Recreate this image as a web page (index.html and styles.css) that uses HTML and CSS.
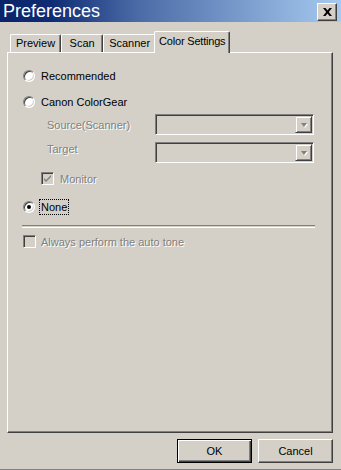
FILE: index.html
```html
<!DOCTYPE html>
<html lang="en">
<head>
  <meta charset="UTF-8" />
  <title>Preferences</title>
  <link rel="stylesheet" href="styles.css">
</head>
<body>
  <div class="window">
    <div class="titlebar">
      <span class="title">Preferences</span>
      <button class="close-btn" aria-label="Close">
        <svg width="9" height="8" viewBox="0 0 9 8">
          <path d="M0 0h2.5l2 2.6L6.5 0H9L5.8 4 9 8H6.5L4.5 5.4 2.5 8H0l3.2-4z" fill="#000"/>
        </svg>
      </button>
    </div>

    <div class="tabs">
      <div class="tab">Preview</div>
      <div class="tab">Scan</div>
      <div class="tab">Scanner</div>
      <div class="tab active">Color Settings</div>
    </div>

    <div class="panel">
      <label class="option"><span class="radio"></span>Recommended</label>
      <label class="option option-gear"><span class="radio"></span>Canon ColorGear</label>

      <div class="field field-source">
        <span class="field-label disabled">Source(Scanner)</span>
        <div class="combo"><span class="combo-btn"><span class="arrow"></span></span></div>
      </div>
      <div class="field field-target">
        <span class="field-label disabled">Target</span>
        <div class="combo"><span class="combo-btn"><span class="arrow"></span></span></div>
      </div>

      <label class="check-row monitor">
        <span class="check">
          <svg width="9" height="9" viewBox="0 0 9 9">
            <path d="M1 4l2 2 5-5v2L3 8 1 6z" fill="#808080"/>
          </svg>
        </span>
        <span class="disabled">Monitor</span>
      </label>

      <label class="option option-none"><span class="radio checked"></span><span class="focus">None</span></label>

      <div class="separator"></div>

      <label class="check-row auto-tone">
        <span class="check"></span>
        <span class="disabled">Always perform the auto tone</span>
      </label>
    </div>

    <div class="footer">
      <button class="btn default">OK</button>
      <button class="btn">Cancel</button>
    </div>
  </div>
</body>
</html>
```

FILE: styles.css
```css
body {
  margin: 0;
  background: #d4d0c8;
  font-family: "Liberation Sans", Arial, sans-serif;
  font-size: 11px;
  color: #000;
}

.window {
  width: 341px;
  height: 470px;
  box-sizing: border-box;
  border-bottom: 1px solid #808080;
  display: flex;
  flex-direction: column;
}

/* title bar */
.titlebar {
  height: 22px;
  background: linear-gradient(to right, #0a246a, #0e2c74 15%, #4a6aa6 40%, #a6caf0);
  display: flex;
  align-items: center;
  justify-content: space-between;
  padding: 0 4px 0 3px;
}

.title {
  color: #fff;
  font-size: 18px;
  line-height: 22px;
}

.close-btn {
  width: 20px;
  height: 18px;
  margin-top: 2px;
  padding: 0;
  box-sizing: border-box;
  background: #d4d0c8;
  border: 1px solid;
  border-color: #fff #404040 #404040 #fff;
  box-shadow: inset -1px -1px #808080;
  display: flex;
  align-items: center;
  justify-content: center;
}

/* tabs */
.tabs {
  display: flex;
  align-items: flex-end;
  margin: 9px 8px 0 7px;
  padding-left: 3px;
  height: 21px;
}

.tab {
  height: 18px;
  min-width: 42px;
  box-sizing: border-box;
  padding: 0 5px;
  line-height: 17px;
  text-align: center;
  border-top: 1px solid #fff;
  border-left: 1px solid #fff;
  border-right: 1px solid #404040;
  border-radius: 2px 2px 0 0;
  box-shadow: inset -1px 0 #808080;
}

.tab.active {
  height: 22px;
  margin: 0 -2px -1px -2px;
  padding: 0 4px;
  line-height: 18px;
  letter-spacing: -0.2px;
  position: relative;
  z-index: 1;
  background: #d4d0c8;
}

/* panel */
.panel {
  height: 381px;
  box-sizing: border-box;
  margin: 0 8px 0 7px;
  padding: 16px 18px 0 15px;
  border: 1px solid;
  border-color: #fff #404040 #404040 #fff;
  box-shadow: inset -1px -1px #808080;
  display: flex;
  flex-direction: column;
}

.option {
  display: flex;
  align-items: center;
  gap: 6px;
  height: 14px;
}

.option-gear {
  margin-top: 12px;
}

.option-none {
  margin-top: 14px;
  height: 16px;
  gap: 4px;
}

.focus {
  border: 1px dotted #000;
  padding: 1px;
  line-height: 12px;
}

.radio {
  width: 12px;
  height: 12px;
  box-sizing: border-box;
  border-radius: 50%;
  border: 1px solid;
  border-color: #808080 #fff #fff #808080;
  background: #fff;
  box-shadow: inset 1px 1px #404040, inset -1px -1px #d4d0c8;
  flex: none;
  display: flex;
  align-items: center;
  justify-content: center;
}

.radio.checked::after {
  content: "";
  width: 4px;
  height: 4px;
  border-radius: 50%;
  background: #000;
}

.disabled {
  color: #808080;
  text-shadow: 1px 1px #fff;
}

/* combo fields */
.field {
  display: flex;
  align-items: center;
  padding-left: 24px;
}

.field-source {
  margin-top: 5px;
}

.field-target {
  margin-top: 7px;
  align-items: flex-start;
}

.field-target .field-label {
  line-height: 13px;
  margin-top: 1px;
}

.field-label {
  width: 108px;
}

.combo {
  width: 159px;
  height: 21px;
  box-sizing: border-box;
  border: 1px solid;
  border-color: #808080 #fff #fff #808080;
  box-shadow: inset 1px 1px #404040, inset -1px -1px #d4d0c8;
  padding: 1px;
  display: flex;
  justify-content: flex-end;
}

.combo-btn {
  width: 17px;
  height: 17px;
  box-sizing: border-box;
  border: 1px solid;
  border-color: #d4d0c8 #404040 #404040 #d4d0c8;
  box-shadow: inset 1px 1px #fff, inset -1px -1px #808080;
  display: flex;
  align-items: center;
  justify-content: center;
}

.arrow {
  width: 0;
  height: 0;
  border-left: 3.5px solid transparent;
  border-right: 3.5px solid transparent;
  border-top: 4px solid #808080;
  filter: drop-shadow(1px 1px 0 #fff);
}

/* checkboxes */
.check-row {
  display: flex;
  align-items: center;
  height: 13px;
}

.monitor {
  margin-top: 9px;
  padding-left: 18px;
  gap: 6px;
}

.auto-tone {
  margin-top: 7px;
  gap: 5px;
}

.check {
  width: 13px;
  height: 13px;
  box-sizing: border-box;
  border: 1px solid;
  border-color: #808080 #fff #fff #808080;
  box-shadow: inset 1px 1px #404040, inset -1px -1px #d4d0c8;
  background: #d4d0c8;
  flex: none;
  display: flex;
  align-items: center;
  justify-content: center;
}

.separator {
  margin-top: 10px;
  margin-left: -1px;
  width: 293px;
  height: 1px;
  border-top: 1px solid #808080;
  border-bottom: 1px solid #fff;
}

/* footer buttons */
.footer {
  display: flex;
  justify-content: flex-end;
  gap: 6px;
  margin: 6px 8px 0 0;
}

.btn {
  width: 75px;
  height: 24px;
  box-sizing: border-box;
  padding: 0;
  font-family: "Liberation Sans", Arial, sans-serif;
  font-size: 11px;
  color: #000;
  background: #d4d0c8;
  border: 1px solid;
  border-color: #fff #404040 #404040 #fff;
  box-shadow: inset -1px -1px #808080;
}

.btn.default {
  border-color: #000;
  box-shadow: inset 1px 1px #fff, inset -1px -1px #404040, inset -2px -2px #808080;
}
```
